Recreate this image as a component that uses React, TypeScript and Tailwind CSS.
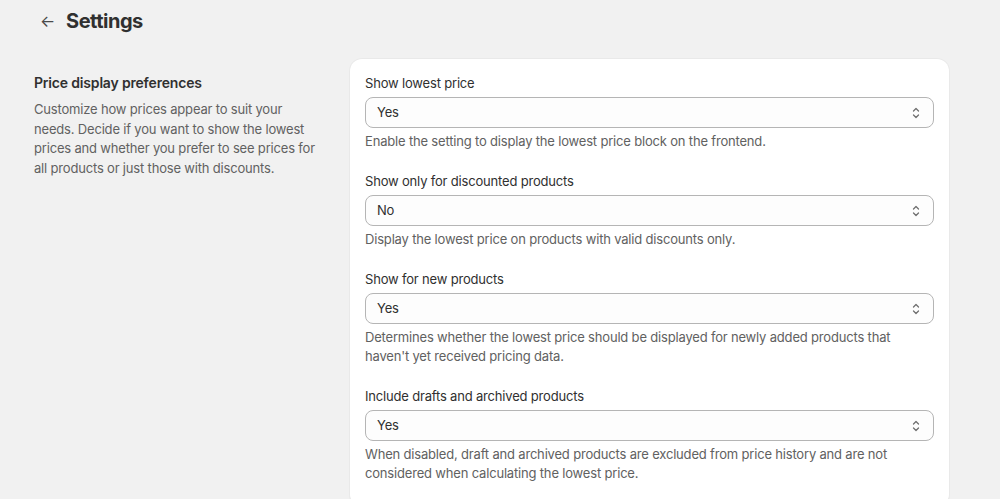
import React from "react";

interface SettingField {
  label: string;
  value: string;
  help: string;
}

const fields: SettingField[] = [
  {
    label: "Show lowest price",
    value: "Yes",
    help: "Enable the setting to display the lowest price block on the frontend.",
  },
  {
    label: "Show only for discounted products",
    value: "No",
    help: "Display the lowest price on products with valid discounts only.",
  },
  {
    label: "Show for new products",
    value: "Yes",
    help: "Determines whether the lowest price should be displayed for newly added products that haven't yet received pricing data.",
  },
  {
    label: "Include drafts and archived products",
    value: "Yes",
    help: "When disabled, draft and archived products are excluded from price history and are not considered when calculating the lowest price.",
  },
];

const SelectIcon = () => (
  <svg width="12" height="16" viewBox="0 0 12 16" fill="none" className="text-[#707070]">
    <path d="M3.5 6l2.5-2.5 2.5 2.5" stroke="currentColor" strokeWidth="1.3" strokeLinecap="round" strokeLinejoin="round" />
    <path d="M3.5 10l2.5 2.5 2.5-2.5" stroke="currentColor" strokeWidth="1.3" strokeLinecap="round" strokeLinejoin="round" />
  </svg>
);

const SelectField: React.FC<SettingField> = ({ label, value, help }) => (
  <div className="flex flex-col">
    <label className="text-[13px] leading-5 text-[#303030]">{label}</label>
    <div className="mt-1 h-[31px] flex items-center justify-between rounded-lg border border-[#b5b5b5] bg-[#fdfdfd] pl-[11px] pr-[11px]">
      <span className="text-[13px] text-[#303030]">{value}</span>
      <SelectIcon />
    </div>
    <p className="mt-1 text-[13px] leading-[19px] text-[#616161]">{help}</p>
  </div>
);

export default function App() {
  return (
    <div
      className="min-h-screen bg-[#f1f1f1] px-[34px] tracking-[-0.18px]"
      style={{ fontFamily: "Inter, 'Noto Sans', sans-serif" }}
    >
      {/* Header */}
      <div className="flex items-center gap-[11px] pt-[7px] h-[35px] pl-[6px]">
        <span className="text-[16px] leading-none text-[#4a4a4a]">←</span>
        <h1 className="text-[20px] leading-7 font-bold tracking-[-0.5px] text-[#303030]">
          Settings
        </h1>
      </div>

      {/* Annotated section */}
      <div className="mt-6 grid grid-cols-[300px_599px] gap-4">
        <div className="pt-[14px] pr-[17px]">
          <h2 className="text-[14px] leading-5 font-semibold text-[#303030]">
            Price display preferences
          </h2>
          <p className="mt-[7px] text-[13px] leading-[19.5px] text-[#616161]">
            Customize how prices appear to suit your needs. Decide if you want to show the
            lowest prices and whether you prefer to see prices for all products or just those
            with discounts.
          </p>
        </div>

        <div className="rounded-xl bg-white px-[15px] pt-[14px] pb-6 shadow-[0_1px_0_rgba(0,0,0,0.07),0_0_0_1px_rgba(0,0,0,0.03)]">
          <div className="flex flex-col gap-5">
            {fields.map((f) => (
              <SelectField key={f.label} {...f} />
            ))}
          </div>
        </div>
      </div>
    </div>
  );
}
